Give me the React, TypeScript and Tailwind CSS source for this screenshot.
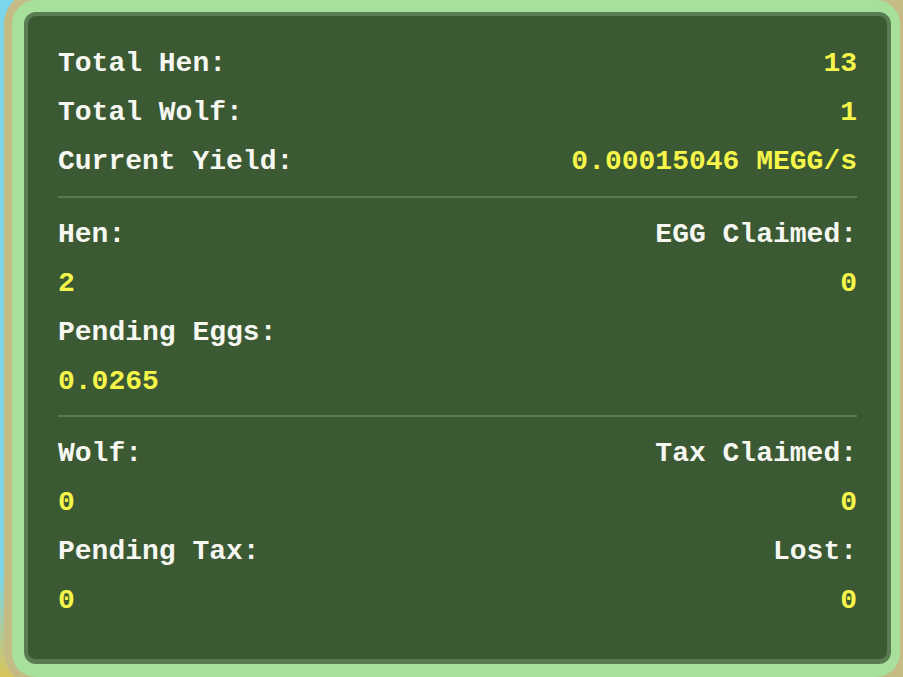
import React from 'react';

type Cell = { label: string; tone: 'label' | 'value' };

const font = { fontFamily: '"Liberation Mono", "Courier New", monospace' };

function Row({ left, right }: { left?: Cell; right?: Cell }) {
    const cls = (c?: Cell) =>
        c?.tone === 'value' ? 'text-[#f6f54a]' : 'text-[#f7f7f2]';
    return (
        <div className="flex h-[49px] items-center justify-between">
            <span className={`whitespace-pre font-bold ${cls(left)}`}>{left?.label ?? ''}</span>
            <span className={`whitespace-pre font-bold ${cls(right)}`}>{right?.label ?? ''}</span>
        </div>
    );
}

const L = (label: string): Cell => ({ label, tone: 'label' });
const V = (label: string): Cell => ({ label, tone: 'value' });

export default function App() {
    return (
        <div className="flex h-[677px] w-[903px] items-start overflow-hidden bg-[linear-gradient(180deg,#7ad6e8_0%,#7ad6e8_85%,#d9c45a_100%)]">
            {/* outer band */}
            <div className="-mt-[8px] ml-[4px] h-[693px] w-[912px] min-w-[912px] shrink-0 rounded-[32px] bg-[#c4bb85] p-[8px]">
                {/* light green frame */}
                <div className="h-full w-[888px] rounded-[24px] bg-[#a6e09a] pb-[13px] pl-[12px] pr-[9px] pt-[12px]">
                    <div
                        style={font}
                        className="h-[652px] rounded-[12px] border-[4px] border-b-[5px] border-[#5a7c52] bg-[#3b5a34] px-[30px] pt-[23px] text-[28px] leading-none"
                    >
                        <Row left={L('Total Hen:')} right={V('13')} />
                        <Row left={L('Total Wolf:')} right={V('1')} />
                        <Row left={L('Current Yield:')} right={V('0.00015046 MEGG/s')} />

                        <div className="mb-[12px] mt-[10px] h-[2px] bg-[#597a51]" />

                        <Row left={L('Hen:')} right={L('EGG Claimed:')} />
                        <Row left={V('2')} right={V('0')} />
                        <Row left={L('Pending Eggs:')} />
                        <Row left={V('0.0265')} />

                        <div className="mb-[12px] mt-[9px] h-[2px] bg-[#597a51]" />

                        <Row left={L('Wolf:')} right={L('Tax Claimed:')} />
                        <Row left={V('0')} right={V('0')} />
                        <Row left={L('Pending Tax:')} right={L('Lost:')} />
                        <Row left={V('0')} right={V('0')} />
                    </div>
                </div>
            </div>
        </div>
    );
}
